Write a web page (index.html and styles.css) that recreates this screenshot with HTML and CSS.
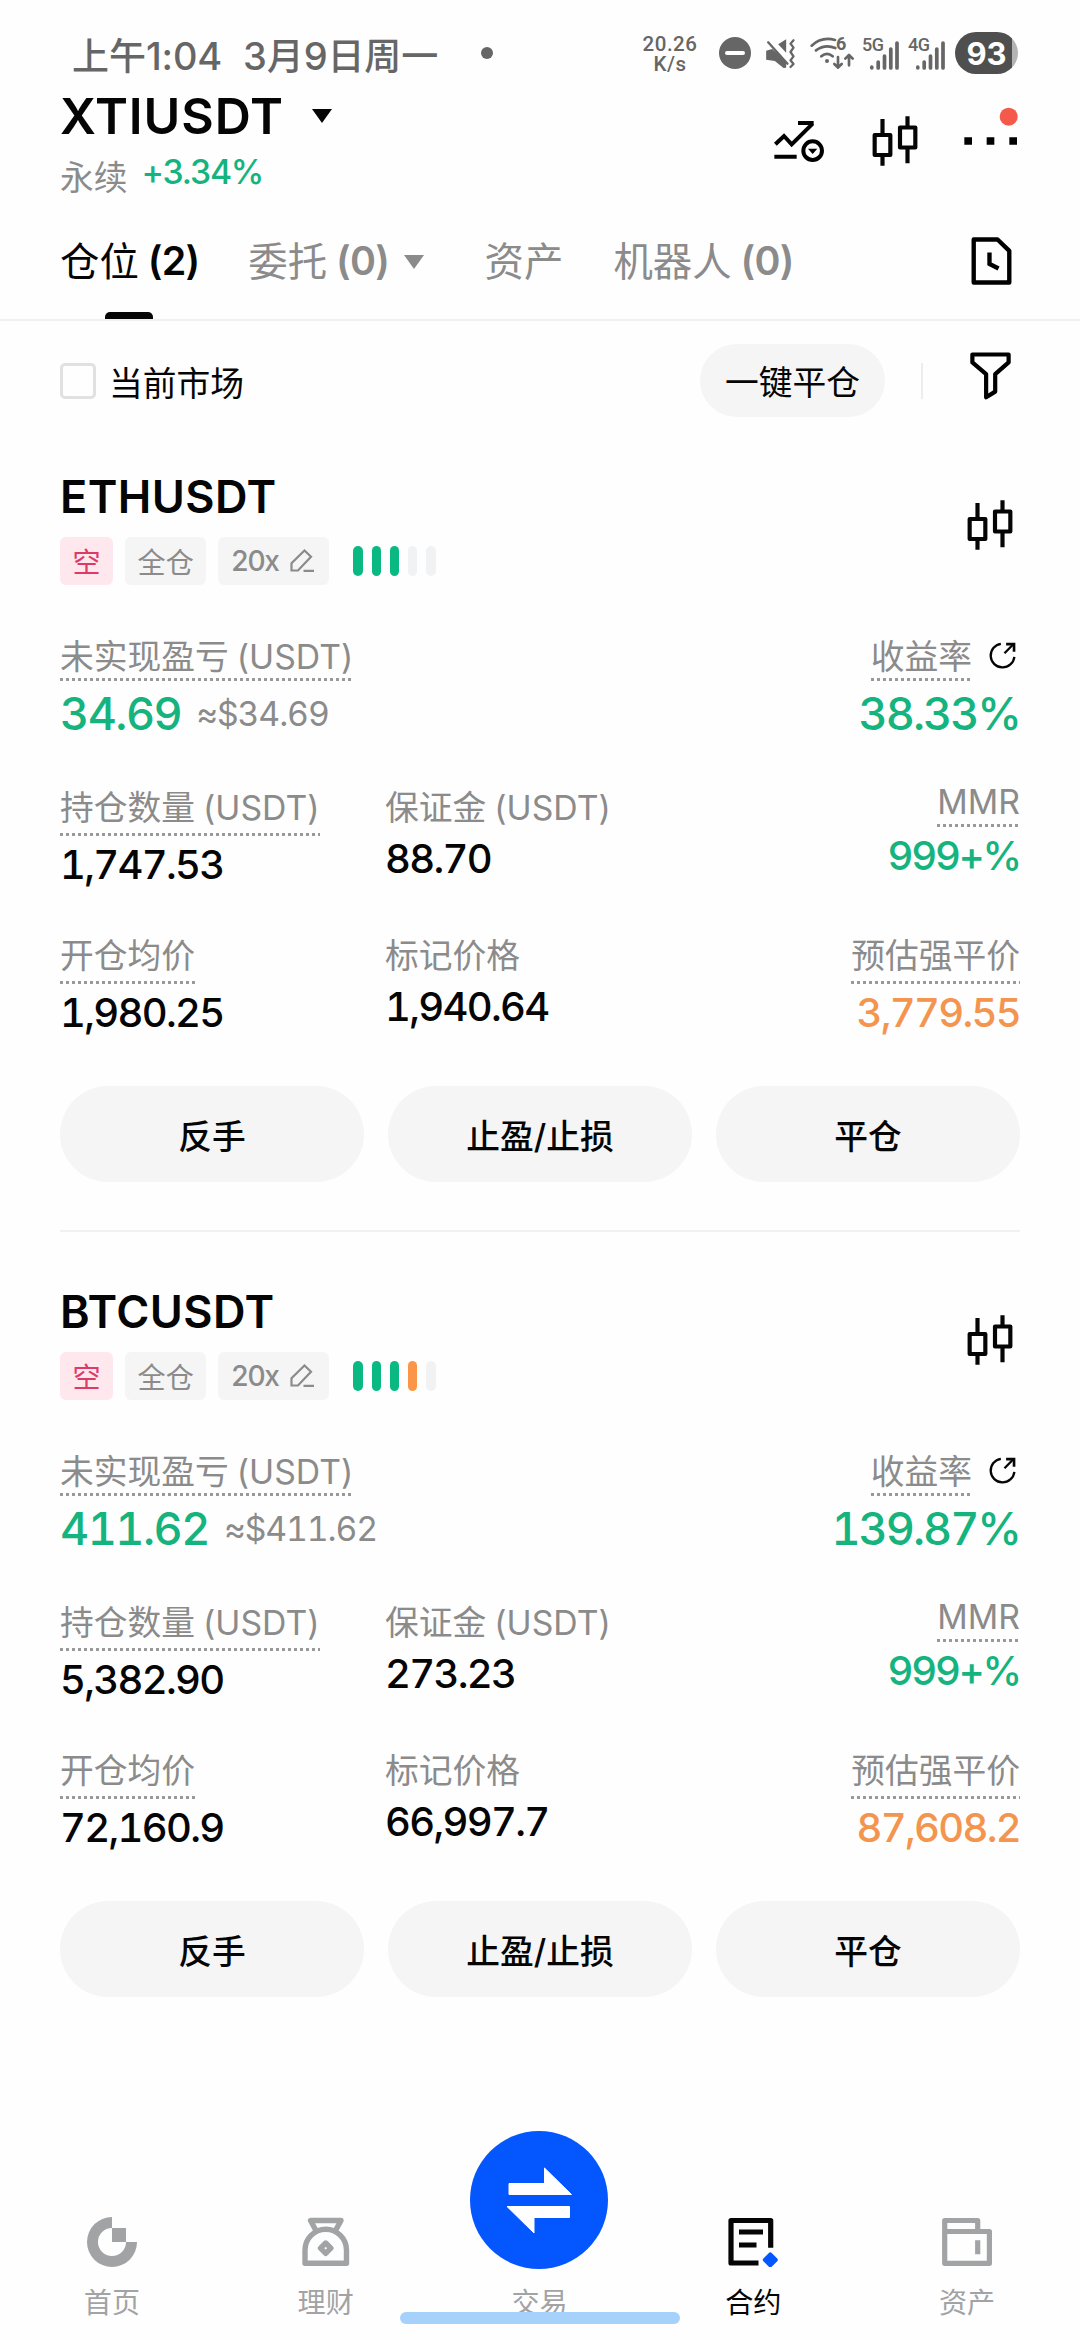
FILE: index.html
```html
<!DOCTYPE html>
<html lang="zh-CN">
<head>
<meta charset="utf-8">
<title>合约仓位</title>
<link rel="stylesheet" href="styles.css">
</head>
<body>
<svg class="defs" aria-hidden="true">
  <symbol id="candles" viewBox="813 349 138 150">
    <g fill="none" stroke="currentColor" stroke-width="12.5" stroke-linejoin="round">
      <rect x="821" y="406" width="47" height="60"/><path d="M844.5 358v45M844.5 468v30"/>
      <rect x="897" y="383.500" width="46" height="60"/><path d="M919.500 350v30M919.500 446v45"/>
    </g>
  </symbol>
  <symbol id="pen" viewBox="0 0 24 24">
    <path d="M1.500 21.500v-7.200L14.500 1.500l6.500 6.300L8 21.500zM13.500 21.800H24" fill="none" stroke="currentColor" stroke-width="2.200"/>
  </symbol>
  <symbol id="share" viewBox="1162 90 88 88">
    <g fill="none" stroke="currentColor" stroke-width="7"><path d="M1201 98.500A36 36 0 1 0 1242 138M1212 127l27-27"/><path d="M1217 99.500h24v23" stroke-width="8"/></g>
  </symbol>
  <symbol id="signal" viewBox="0 0 38 34">
    <path d="M9.800 31.200v.6M16.200 26v6M22.500 20v12M28.800 13v19M35 7v25" fill="none" stroke="currentColor" stroke-width="3.700" stroke-linecap="round"/>
  </symbol>
</svg>

<div class="status">
  <span class="clock">上午<i>1:04</i></span>
  <span class="date"><i>3</i>月<i>9</i>日周一</span>
  <span class="notice"></span>
  <span class="speed"><span>20.26</span><span>K/s</span></span>
  <span class="dnd"></span>
  <svg class="mute" viewBox="494 111 92 93" fill="currentColor"><path d="M497 149l18-5 42 36v20l-8 1-26-21-26-4zM533 130l24-15v40z"/><path d="M503 124l58 64" stroke="currentColor" stroke-width="7" stroke-linecap="round"/><path d="M579 118l-9 10 9 12-9 13 9 13-9 12 9 11-9 9" fill="none" stroke="currentColor" stroke-width="7" stroke-linecap="round" stroke-linejoin="round"/></svg>
  <span class="wifi"><svg viewBox="627 108 132 102"><g fill="none" stroke="currentColor" stroke-width="8" stroke-linecap="round" stroke-linejoin="round"><path d="M632 137q30-28 70-17M645 151q27-20 58-7M661 169q17-15 34 0"/><path d="M711 171v32m-11-11l11 11 11-11M744 196v-31m-11 11l11-11 11 11"/></g><circle cx="678" cy="183" r="6" fill="currentColor"/></svg><b>6</b></span>
  <span class="cell"><b>5G</b><svg><use href="#signal"/></svg></span>
  <span class="cell"><b>4G</b><svg><use href="#signal"/></svg></span>
  <span class="battery">93</span>
</div>

<header class="header">
  <div>
    <h1 class="pair">XTIUSDT<span class="caret"></span></h1>
    <p class="change"><span>永续</span><b>+3.34%</b></p>
  </div>
  <div class="tools">
    <svg class="trend" viewBox="516 360 156 130" fill="none" stroke="#000" stroke-width="12"><path d="M523 433l26-25 23 25 63-62" stroke-linejoin="miter"/><path d="M591 369h47M520 470.500h67"/><circle cx="635" cy="452" r="28"/><path d="M621 446h28l-14 16z" fill="#000" stroke="none"/></svg>
    <svg class="candle-icon"><use href="#candles"/></svg>
    <svg class="more" viewBox="1090 322 162 116"><path d="M1091 413h23v22h-23zM1158 413h23v22h-23zM1226 413h23v22h-23z"/><circle cx="1224" cy="351" r="27" fill="#f5594c"/></svg>
  </div>
</header>

<nav class="tabs">
  <span class="tab on">仓位 <b>(2)</b></span>
  <span class="tab">委托 <b>(0)</b><span class="caret"></span></span>
  <span class="tab">资产</span>
  <span class="tab">机器人 <b>(0)</b></span>
  <svg class="history" viewBox="1109 710 122 143" fill="none" stroke="#000" stroke-width="13"><path d="M1117 717.500h71l35 34v94h-106z" stroke-linejoin="round"/><path d="M1164 756v34l27 14"/></svg>
</nav>

<div class="filters">
  <span class="box"></span><span class="only">当前市场</span>
  <button class="close-all">一键平仓</button>
  <span class="sep"></span>
  <svg class="funnel" viewBox="1109 68 122 143" fill="none" stroke="#000" stroke-width="12.500" stroke-linejoin="round"><path d="M1116 75.500h108V99l-40 35v52l-27 17v-69l-41-35z"/></svg>
</div>

<main>
  <section class="card">
    <div class="top">
      <div>
        <h2>ETHUSDT</h2>
        <div class="tags"><span class="tag short">空</span><span class="tag cross">全仓</span><span class="tag lev">20x<svg><use href="#pen"/></svg></span>
          <span class="risk"><i class="g"></i><i class="g"></i><i class="g"></i><i></i><i></i></span></div>
      </div>
      <svg class="candle-icon"><use href="#candles"/></svg>
    </div>
    <div class="pnl">
      <div><span class="label dot">未实现盈亏 <u>(USDT)</u></span><div class="big">34.69<small>≈$34.69</small></div></div>
      <div class="end"><div class="roi"><span class="label dot">收益率</span><svg><use href="#share"/></svg></div><div class="big pct">38.33%</div></div>
    </div>
    <div class="grid">
      <div><span class="label dot">持仓数量 <u>(USDT)</u></span><div class="val">1,747.53</div></div>
      <div><span class="label">保证金 <u>(USDT)</u></span><div class="val">88.70</div></div>
      <div class="end mmr"><span class="label dot">MMR</span><div class="val up">999+%</div></div>
      <div><span class="label dot">开仓均价</span><div class="val">1,980.25</div></div>
      <div><span class="label">标记价格</span><div class="val">1,940.64</div></div>
      <div class="end"><span class="label dot">预估强平价</span><div class="val warn">3,779.55</div></div>
    </div>
    <div class="actions"><button>反手</button><button>止盈/止损</button><button>平仓</button></div>
  </section>

  <section class="card">
    <div class="top">
      <div>
        <h2>BTCUSDT</h2>
        <div class="tags"><span class="tag short">空</span><span class="tag cross">全仓</span><span class="tag lev">20x<svg><use href="#pen"/></svg></span>
          <span class="risk"><i class="g"></i><i class="g"></i><i class="g"></i><i class="o"></i><i></i></span></div>
      </div>
      <svg class="candle-icon"><use href="#candles"/></svg>
    </div>
    <div class="pnl">
      <div><span class="label dot">未实现盈亏 <u>(USDT)</u></span><div class="big">411.62<small>≈$411.62</small></div></div>
      <div class="end"><div class="roi"><span class="label dot">收益率</span><svg><use href="#share"/></svg></div><div class="big pct">139.87%</div></div>
    </div>
    <div class="grid">
      <div><span class="label dot">持仓数量 <u>(USDT)</u></span><div class="val">5,382.90</div></div>
      <div><span class="label">保证金 <u>(USDT)</u></span><div class="val">273.23</div></div>
      <div class="end mmr"><span class="label dot">MMR</span><div class="val up">999+%</div></div>
      <div><span class="label dot">开仓均价</span><div class="val">72,160.9</div></div>
      <div><span class="label">标记价格</span><div class="val">66,997.7</div></div>
      <div class="end"><span class="label dot">预估强平价</span><div class="val warn">87,608.2</div></div>
    </div>
    <div class="actions"><button>反手</button><button>止盈/止损</button><button>平仓</button></div>
  </section>
</main>

<nav class="bottom">
  <a><svg width="50" height="50" viewBox="0 0 50 50" fill="currentColor"><path d="M25 0A25 25 0 1 0 50 25H39A14 14 0 1 1 25 11z"/><path d="M25 11h14v14H25z"/></svg>首页</a>
  <a><svg width="48" height="50" viewBox="0 0 48 50" fill="none" stroke="currentColor" stroke-width="5.400" stroke-linejoin="round"><path d="M14.500 14.500L8.500 3.500h30.500l-6 11M3 46.300V33a20.700 20.700 0 0 1 41.500 0v13.300z"/><path d="M23.700 26l5.200 5.200-5.200 5.200-5.200-5.200z"/></svg>理财</a>
  <a class="trade"><svg width="138" height="138" viewBox="0 0 138 138"><circle cx="69" cy="69" r="69" fill="#0456ff"/><path d="M39 52.500h35.500v-15.500L101.500 63.500H39zM99.500 75.500v11H64v15.500L37 75.500z" fill="#fff" stroke="#fff" stroke-linejoin="round"/></svg>交易</a>
  <a class="on"><svg width="50" height="50" viewBox="0 0 50 50"><path d="M30.500 46H3V3.500h39.700v27.200M11 15h24M11 28h17.500" fill="none" stroke="currentColor" stroke-width="5.200" stroke-linejoin="round"/><path d="M42.300 37.300l5.500 5.500-5.500 5.500-5.500-5.500z" fill="#0456ff" stroke="#0456ff" stroke-width="4" stroke-linejoin="round"/></svg>合约</a>
  <a><svg width="50" height="50" viewBox="0 0 50 50" fill="none" stroke="currentColor" stroke-width="5.200" stroke-linejoin="round"><path d="M2.700 14.500V3.500h33v11M2.700 14.500h44.700v31.800H2.700zM35.700 23.300v14"/></svg>资产</a>
</nav>
<div class="home-bar"></div>
</body>
</html>
```
FILE: styles.css
```css
* { box-sizing: border-box; margin: 0; padding: 0; }
body {
  position: relative;
  width: 1080px;
  height: 2340px;
  overflow: hidden;
  display: flex;
  flex-direction: column;
  background: #fefefe;
  color: #050505;
  font-family: Inter, "Noto Sans CJK SC", sans-serif;
  font-size: 33.75px;
  line-height: 40px;
}
i, u { font-style: normal; text-decoration: none; }
svg { display: block; flex: none; }
button { border: 0; background: #f5f5f5; color: inherit; font: inherit; }
.defs { position: absolute; width: 0; height: 0; }

/* system status bar */
.status {
  display: flex;
  align-items: center;
  height: 86px;
  padding: 20px 62px 0 72px;
  color: #666;
  font-size: 37px;
  font-weight: 500;
  white-space: nowrap;
}
.clock { width: 171px; padding-top: 6px; }
.date { width: 238px; flex: none; padding-top: 6px; }
.clock i, .date i { font-size: 38px; letter-spacing: -0.2px; }
.notice { width: 12px; height: 12px; border-radius: 50%; background: #666; }
.speed {
  display: flex;
  flex-direction: column;
  align-items: center;
  width: 56px;
  margin-left: 149px;
  padding-top: 2px;
  font: 500 20.500px/20px Roboto, sans-serif;
  letter-spacing: 0.5px;
}
.dnd { display: flex; align-items: center; justify-content: center; width: 32px; height: 32px; margin-left: 21px; border-radius: 50%; background: #666; }
.dnd::after { content: ""; width: 20px; height: 4px; border-radius: 2px; background: #fff; }
.mute { width: 31px; height: 31px; margin-left: 14px; }
.wifi { display: flex; width: 44px; margin-left: 14px; }
.wifi svg { width: 44px; height: 34px; }
.wifi b { font: 700 18px/18px Roboto, sans-serif; margin-left: -18px; margin-top: -1px; }
.cell { display: flex; width: 38px; margin-left: 8px; }
.cell b { width: 22px; margin-right: -22px; font: 500 18px/17px Roboto, sans-serif; letter-spacing: -0.5px; }
.cell svg { width: 38px; height: 34px; }
.battery {
  width: 63px;
  height: 42px;
  margin-left: 9px;
  border-radius: 21px;
  background: linear-gradient(90deg, #4f4f4f 57px, #b4b4b4 57px);
  color: #fff;
  font-size: 31px;
  font-weight: 700;
  line-height: 43px;
  text-align: center;
}

/* pair header */
.header { display: flex; justify-content: space-between; height: 129px; padding: 0 62px 0 60px; }
.pair { display: flex; align-items: center; font-size: 50px; font-weight: 600; line-height: 60px; letter-spacing: 0.900px; }
.caret { border: 10px solid transparent; border-top: 14px solid; border-bottom: 0; margin-left: 28px; }
.change { display: flex; margin-top: 6px; color: #8b8b8b; }
.change span { padding-top: 6px; }
.change b { margin-left: 14px; color: #15b37d; font-weight: 500; letter-spacing: -1.2px; }
.tools { display: flex; padding-top: 21px; }
.trend { width: 52px; height: 43.300px; margin-top: 13px; }
.candle-icon { width: 46px; height: 50px; color: #050505; }
.tools .candle-icon { margin: 9px 0 0 47px; }
.more { width: 54px; height: 38.700px; margin-left: 46px; }

/* tabs */
.tabs {
  display: flex;
  height: 106px;
  padding: 22px 68px 0 60px;
  border-bottom: 2px solid #f1f1f1;
  color: #8b8b8b;
  font-size: 39.400px;
  line-height: 48px;
}
.tab { display: flex; gap: 9px; align-items: flex-start; margin-right: 50px; padding-top: 1px; white-space: nowrap; }
.tab b { font-weight: 600; letter-spacing: -0.800px; margin-top: -1px; }
.tab .caret { margin: 17px 10.500px 0 6px; }
.tab.on { position: relative; color: #050505; margin-right: 49px; }
.tab.on::after { content: ""; position: absolute; left: 45px; bottom: 0; width: 48px; height: 7px; border-radius: 5px 5px 0 0; background: #050505; }
.history { width: 41px; height: 48px; margin-left: auto; }

/* filter row */
.filters { display: flex; align-items: center; height: 96px; padding: 23px 69px 0 60px; }
.box { width: 36px; height: 36px; border: 3px solid #e1e1e1; border-radius: 5px; }
.only { margin-left: 13px; padding-top: 7px; }
.close-all { width: 185px; height: 73px; margin-left: auto; padding-top: 5px; border-radius: 37px; }
.sep { width: 2px; height: 36px; margin: 0 47px 0 36px; background: #ededed; }
.funnel { width: 41px; height: 48px; margin-top: -10px; }

/* position cards */
.card { margin: 0 60px; padding-top: 53px; height: 813px; }
.card + .card { border-top: 2px solid #f1f1f1; }
.top { display: flex; justify-content: space-between; }
.top .candle-icon { margin: 30px 7px 0 0; }
h2 { font-size: 45px; font-weight: 600; line-height: 54px; letter-spacing: 0.400px; }
.tags { display: flex; align-items: center; margin-top: 13px; gap: 12px; font-size: 28.100px; }
.tag { display: flex; height: 48px; padding: 0 12.500px; align-items: center; border-radius: 6px; background: #f5f5f5; color: #8b8b8b; }
.tag.short { padding-top: 3px; background: #ffe8ed; color: #dd3b67; }
.tag.cross { padding-top: 3px; }
.tag.lev { width: 111px; padding-left: 13px; font-weight: 500; letter-spacing: -1.200px; }
.tag.lev svg { width: 24px; height: 24px; margin-left: 11px; }
.risk { display: flex; gap: 8.700px; margin-left: 12px; }
.risk i { width: 9.500px; height: 30px; border-radius: 5px; background: #f1f2f3; }
.risk .g { background: #0ab981; }
.risk .o { background: #fb9648; }

.label { display: inline-block; color: #8b8b8b; white-space: nowrap; vertical-align: top; }
.label u { margin-left: -1.500px; }
.label.dot {
  padding-bottom: 8px;
  background: repeating-linear-gradient(90deg, #999 0 3px, transparent 3px 6px) left bottom / 100% 3px no-repeat;
}
.end { display: flex; flex-direction: column; align-items: flex-end; }
.pnl { display: flex; justify-content: space-between; height: 151px; margin-top: 52px; }
.pnl .label.dot { padding-bottom: 4px; }
.roi { display: flex; }
.roi svg { width: 29px; height: 29px; margin: 4px 3px 0 16px; }
.big, .val { font-variant-numeric: tabular-nums; }
.big { display: flex; height: 50px; margin-top: 8px; align-items: center; color: #15b37d; font-size: 45px; font-weight: 500; line-height: 50px; letter-spacing: -1.500px; }
.big small { margin-left: 15px; color: #8b8b8b; font-size: 33.750px; font-weight: 400; letter-spacing: -1.100px; }
.big.pct { letter-spacing: -2px; }
.grid { display: grid; grid-template-columns: 325px 323px 1fr; grid-auto-rows: 148px; }
.val { height: 48px; margin-top: 7px; font-size: 40px; font-weight: 500; line-height: 48px; letter-spacing: -1.700px; }
.dot + .val { margin-top: 5px; }
.mmr .label { padding-bottom: 11px; line-height: 28px; }
.mmr .val { letter-spacing: -2.200px; }
.up { color: #15b37d; }
.warn { color: #f3954f; }
.actions { display: grid; grid-template-columns: repeat(3, 1fr); gap: 24px; margin-top: 2px; }
.actions button { height: 96px; padding-top: 5px; border-radius: 48px; font-weight: 500; }

/* bottom navigation */
.bottom { display: flex; height: 211px; margin-top: auto; padding: 0 6px 0 5px; color: #a1a3a5; font-size: 28.100px; line-height: 36px; }
.bottom a { display: flex; flex: 1; flex-direction: column; align-items: center; justify-content: flex-end; gap: 18px; padding-bottom: 19px; }
.bottom .trade { gap: 16px; }
.bottom .on { color: #050505; }
.home-bar { position: absolute; left: 400px; top: 2312px; width: 280px; height: 12px; border-radius: 6px; background: #a6d1fb; }
```
